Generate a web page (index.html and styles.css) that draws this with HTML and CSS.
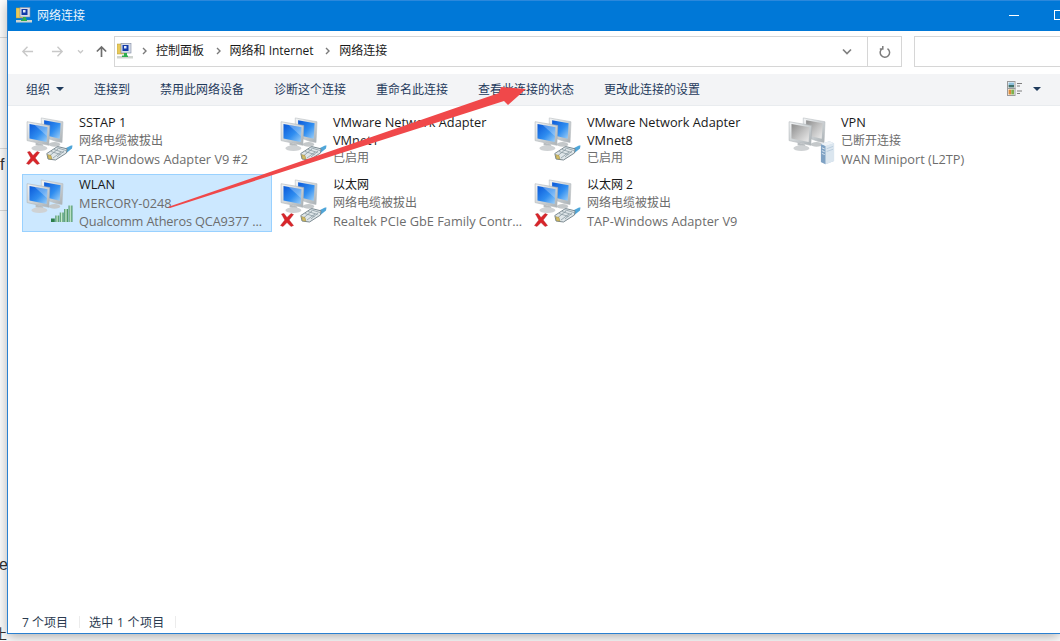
FILE: index.html
```html
<!DOCTYPE html>
<html lang="zh-CN">
<head>
<meta charset="utf-8">
<title>网络连接</title>
<link rel="stylesheet" href="styles.css">
</head>
<body>
<svg class="defs" width="0" height="0" aria-hidden="true">
  <defs>
    <linearGradient id="scr" x1="0" y1="0" x2="1" y2="1"><stop offset="0" stop-color="#0a58d8"/><stop offset=".55" stop-color="#2f8df0"/><stop offset="1" stop-color="#9fd0f7"/></linearGradient>
    <linearGradient id="scrg" x1="0" y1="0" x2="1" y2="1"><stop offset="0" stop-color="#8c8c8c"/><stop offset=".55" stop-color="#c4c4c4"/><stop offset="1" stop-color="#ececec"/></linearGradient>
    <linearGradient id="bez" x1="0" y1="0" x2="1" y2="1"><stop offset="0" stop-color="#f4f6f7"/><stop offset="1" stop-color="#a9b0b4"/></linearGradient>
    <linearGradient id="bar" x1="0" y1="0" x2="1" y2="0"><stop offset="0" stop-color="#2c7f4b"/><stop offset=".45" stop-color="#c8ead0"/><stop offset="1" stop-color="#2c7f4b"/></linearGradient>
    <symbol id="pcs" viewBox="0 0 44 36">
      <path d="M17 1 40 5 39 27 33 26 17 20Z" fill="url(#bez)" stroke="#b4babd" stroke-width=".6"/>
      <path d="M20 3.500 37.500 6.500 36.500 23 20 19Z" fill="url(#scr)"/>
      <ellipse cx="31" cy="29" rx="6" ry="2.500" fill="#c4c8ca"/>
      <path d="M2 5 26 9 25 30 2 25Z" fill="url(#bez)" stroke="#aab0b3" stroke-width=".6"/>
      <path d="M4.500 7.500 23.500 10.800 22.700 26.500 4.500 22.800Z" fill="url(#scr)"/>
      <path d="M10 8.500 23.500 10.800 22.900 20Z" fill="#fff" opacity=".28"/>
      <path d="M11 27 19 29 19 32 11 30Z" fill="#b7bcbf"/>
      <ellipse cx="15" cy="33" rx="8.500" ry="3" fill="#cfd2d4"/>
    </symbol>
    <symbol id="pcs-off" viewBox="0 0 44 36">
      <path d="M17 1 40 5 39 27 33 26 17 20Z" fill="url(#bez)" stroke="#b4babd" stroke-width=".6"/>
      <path d="M20 3.500 37.500 6.500 36.500 23 20 19Z" fill="url(#scrg)"/>
      <ellipse cx="31" cy="29" rx="6" ry="2.500" fill="#c4c8ca"/>
      <path d="M2 5 26 9 25 30 2 25Z" fill="url(#bez)" stroke="#aab0b3" stroke-width=".6"/>
      <path d="M4.500 7.500 23.500 10.800 22.700 26.500 4.500 22.800Z" fill="url(#scrg)"/>
      <path d="M11 27 19 29 19 32 11 30Z" fill="#b7bcbf"/>
      <ellipse cx="15" cy="33" rx="8.500" ry="3" fill="#cfd2d4"/>
    </symbol>
    <symbol id="plug" viewBox="0 0 27 16">
      <path d="M18 4 25 .5 26.500 .5 26 3.500 21 7.500Z" fill="#4fa6d9"/>
      <path d="M.8 8.500 11.500 1.500 21 3.800 20.500 8 9.500 15 2 14Z" fill="#dfe6e9" stroke="#6f7f87" stroke-width=".9"/>
      <path d="M5 6.500 14.500 9.500M8 4.500 17.500 7.500M11 2.800 20 5.500M7 13 15 7M11 12 18 6M4 10.500 12 4" stroke="#7f9099" stroke-width=".7" fill="none"/>
      <path d="M1.500 9.500 2.500 13.800 6 14.300 5 10.500Z" fill="#d2bb62" stroke="#8a7c3c" stroke-width=".4"/>
    </symbol>
    <symbol id="cross" viewBox="0 0 14 14">
      <path d="M1.500 1 4 .5 7 4.500 11 .5 13.500 1.500 9.200 7 13.500 12.500 11 13.500 7 9.500 3 13.500 .5 12.500 4.800 7Z" fill="#d9252a" stroke="#b31c20" stroke-width=".4"/>
    </symbol>
    <symbol id="signal" viewBox="0 0 22 17">
      <path d="M0 13.500h3.800v3.500H0Z" fill="#2c7f4b"/>
      <path d="M4.400 10.500h3.800v6.500H4.400Z" fill="url(#bar)"/>
      <path d="M8.800 7.500h3.800v9.500H8.800Z" fill="url(#bar)"/>
      <path d="M13.200 4h3.800v13h-3.800Z" fill="url(#bar)"/>
      <path d="M17.600 .5h3.800V17h-3.800Z" fill="url(#bar)"/>
    </symbol>
    <symbol id="server" viewBox="0 0 16 26">
      <path d="M1 4 10 1 15 3 15 22 6 25.500 1 23Z" fill="#b9cde0"/>
      <path d="M1 4 6 6 6 25.500 1 23Z" fill="#7fa2c4"/>
      <path d="M6 6 15 3 15 22 6 25.500Z" fill="#dbe6ef"/>
      <path d="M1 4 10 1 15 3 6 6Z" fill="#eef3f7"/>
      <path d="M2 8 5 9.200M2 11 5 12.200M2 14 5 15.200" stroke="#e8f0f6" stroke-width=".9"/>
      <path d="M7 9 14 6.500M7 12 14 9.500" stroke="#a9c0d6" stroke-width=".7"/>
    </symbol>
    <symbol id="netfolder" viewBox="0 0 16 16">
      <path d="M0 1h7l1 1v9H0Z" fill="#e8c95a" stroke="#b39a3c" stroke-width=".5"/>
      <rect x="4" y=".5" width="10" height="9.500" fill="#d7dde8" stroke="#7f8aa0" stroke-width=".6"/>
      <rect x="5.500" y="2" width="6" height="6" fill="#123aa8"/>
      <rect x="7" y="3" width="2.500" height="2.500" fill="#dfe9fb"/>
      <rect x="7" y="10" width="3" height="3" fill="#2fae4e"/>
      <rect x="0" y="13" width="16" height="2.500" fill="#cfd4cf"/>
      <rect x="5" y="12.500" width="6" height="1.500" fill="#2fae4e"/>
    </symbol>
  </defs>
</svg>

<span class="bg-line bg-line-a"></span>
<span class="bg-line bg-line-b"></span>
<span class="bg-line bg-line-c"></span>
<span class="behind behind-f">f</span>
<span class="behind behind-e">e</span>
<span class="behind behind-z">止</span>

<main class="window">
  <header class="titlebar">
    <svg class="title-icon"><use href="#netfolder"/></svg>
    <span class="title-text">网络连接</span>
    <span class="title-spacer"></span>
    <span class="win-min"></span>
    <span class="win-max"></span>
  </header>

  <nav class="addressbar">
    <div class="nav-buttons">
      <svg class="nav-ic" viewBox="0 0 14 14"><path d="M13 7H2M7 2 2 7l5 5" class="stroke-faint"/></svg>
      <svg class="nav-ic nav-fwd" viewBox="0 0 14 14"><path d="M1 7h11M7 2l5 5-5 5" class="stroke-faint"/></svg>
      <svg class="nav-down" viewBox="0 0 8 6"><path d="M1 1.500 4 4.500 7 1.500" class="stroke-faint"/></svg>
      <svg class="nav-ic nav-up" viewBox="0 0 14 14"><path d="M7 13V2M2 7l5-5 5 5" class="stroke-up"/></svg>
    </div>
    <div class="address">
      <svg class="addr-icon"><use href="#netfolder"/></svg>
      <svg class="crumb-sep" viewBox="0 0 5 8"><path d="M1 1 4 4 1 7" class="stroke-sep"/></svg><span class="crumb">控制面板</span>
      <svg class="crumb-sep" viewBox="0 0 5 8"><path d="M1 1 4 4 1 7" class="stroke-sep"/></svg><span class="crumb">网络和 Internet</span>
      <svg class="crumb-sep" viewBox="0 0 5 8"><path d="M1 1 4 4 1 7" class="stroke-sep"/></svg><span class="crumb">网络连接</span>
      <span class="addr-spacer"></span>
      <svg class="addr-drop" viewBox="0 0 10 7"><path d="M1 1.500 5 5.500 9 1.500" class="stroke-mid"/></svg>
      <span class="addr-refresh">
        <svg viewBox="0 0 12 12" width="12" height="12"><path d="M3.800 2.300A4.700 4.700 0 1 0 8.500 2.600M3.800 0V3H.8" class="stroke-mid2"/></svg>
      </span>
    </div>
    <div class="search"></div>
  </nav>

  <div class="toolbar">
    <span class="tool tool-org">组织<i class="caret"></i></span>
    <span class="tool">连接到</span>
    <span class="tool">禁用此网络设备</span>
    <span class="tool">诊断这个连接</span>
    <span class="tool">重命名此连接</span>
    <span class="tool">查看此连接的状态</span>
    <span class="tool">更改此连接的设置</span>
    <span class="tool-spacer"></span>
    <svg class="view-ic" viewBox="0 0 15 15">
      <rect x=".5" y=".5" width="7.500" height="7" fill="#fff" stroke="#9a9a9a"/>
      <rect x="1.500" y="1.500" width="5.500" height="2.500" fill="#8fc0dc"/>
      <rect x="1.500" y="4" width="5.500" height="2.500" fill="#3f6f6a"/>
      <rect x=".5" y="7.500" width="7.500" height="7" fill="#fff" stroke="#9a9a9a"/>
      <rect x="1.500" y="8.500" width="2.800" height="5" fill="#d98a3c"/>
      <rect x="4.300" y="8.500" width="2.700" height="5" fill="#7fb04c"/>
      <path d="M10 2.500h5M10 5h3M10 10h5M10 12.500h3" stroke="#7f7f7f"/>
    </svg>
    <i class="caret caret-view"></i>
  </div>

  <section class="content">
    <div class="grid">
      <article class="item">
        <div class="icon"><svg class="pcs"><use href="#pcs"/></svg><svg class="plug"><use href="#plug"/></svg><svg class="cross"><use href="#cross"/></svg></div>
        <div class="text"><div class="name latin first">SSTAP 1</div><div class="sub">网络电缆被拔出</div><div class="sub latin">TAP-Windows Adapter V9 #2</div></div>
      </article>
      <article class="item">
        <div class="icon"><svg class="pcs"><use href="#pcs"/></svg><svg class="plug"><use href="#plug"/></svg></div>
        <div class="text tight"><div class="name latin first">VMware Network Adapter</div><div class="name latin">VMnet1</div><div class="sub">已启用</div></div>
      </article>
      <article class="item">
        <div class="icon"><svg class="pcs"><use href="#pcs"/></svg><svg class="plug"><use href="#plug"/></svg></div>
        <div class="text tight"><div class="name latin first">VMware Network Adapter</div><div class="name latin">VMnet8</div><div class="sub">已启用</div></div>
      </article>
      <article class="item">
        <div class="icon"><svg class="pcs"><use href="#pcs-off"/></svg><svg class="server"><use href="#server"/></svg></div>
        <div class="text"><div class="name latin first">VPN</div><div class="sub">已断开连接</div><div class="sub latin">WAN Miniport (L2TP)</div></div>
      </article>
      <article class="item selected">
        <div class="icon"><svg class="pcs"><use href="#pcs"/></svg><svg class="signal"><use href="#signal"/></svg></div>
        <div class="text"><div class="name latin first">WLAN</div><div class="sub latin">MERCORY-0248</div><div class="sub latin squeeze">Qualcomm Atheros QCA9377 ...</div></div>
      </article>
      <article class="item">
        <div class="icon"><svg class="pcs"><use href="#pcs"/></svg><svg class="plug"><use href="#plug"/></svg><svg class="cross"><use href="#cross"/></svg></div>
        <div class="text"><div class="name">以太网</div><div class="sub">网络电缆被拔出</div><div class="sub latin">Realtek PCIe GbE Family Contr...</div></div>
      </article>
      <article class="item">
        <div class="icon"><svg class="pcs"><use href="#pcs"/></svg><svg class="plug"><use href="#plug"/></svg><svg class="cross"><use href="#cross"/></svg></div>
        <div class="text"><div class="name">以太网 2</div><div class="sub">网络电缆被拔出</div><div class="sub latin">TAP-Windows Adapter V9</div></div>
      </article>
    </div>
  </section>

  <footer class="statusbar">
    <span class="status">7 个项目</span>
    <span class="status status-wide">选中 1 个项目</span>
  </footer>
</main>

<svg class="arrow" viewBox="0 0 1060 641" aria-hidden="true">
  <path d="M168 207 499 93 501 87 526 89 508 105 504 101 170 208Z" fill="#f0484a"/>
</svg>
</body>
</html>
```

FILE: styles.css
```css
* { box-sizing: border-box; }
html, body { margin: 0; padding: 0; height: 100%; }
body {
  width: 1060px;
  height: 641px;
  overflow: hidden;
  position: relative;
  background: #fff;
  font-family: "Open Sans", "Noto Sans CJK SC", sans-serif;
  font-size: 12px;
}
.defs { position: absolute; }
.bg-line { position: absolute; left: 0; width: 7px; height: 1px; background: #dcdcdc; }
.bg-line-a { top: 37px; }
.bg-line-b { top: 148px; }
.bg-line-c { top: 210px; }
.behind { position: absolute; font-size: 16px; line-height: 18px; color: #333; font-family: "Liberation Sans", "Noto Sans CJK SC", sans-serif; }
.behind-f { top: 156px; left: 0; }
.behind-e { top: 556px; left: -1px; }
.behind-z { top: 625px; left: -7px; font-size: 14px; }

.window {
  position: absolute;
  left: 7px;
  top: 0;
  width: 1053px;
  height: 634px;
  background: #fff;
  border-left: 1px solid #2a80d0;
  border-bottom: 1px solid #2a80d0;
  box-shadow: 0 3px 12px rgba(0, 0, 0, .32);
  display: flex;
  flex-direction: column;
}

.titlebar {
  height: 31px;
  flex: none;
  background: #0078d7;
  display: flex;
  align-items: center;
  color: #fff;
  padding: 0 0 2px 8px;
  border-top: 1px solid #2b88dc;
}
.title-icon { width: 16px; height: 16px; margin-right: 5px; }
.title-text { color: #eaf4fc; }
.title-spacer { flex: 1; }
.win-min { width: 10px; height: 1px; background: #fff; margin-right: 35px; }
.win-max { width: 6px; height: 10px; border: 1px solid #fff; border-right-width: 0; }

.addressbar {
  height: 43px;
  flex: none;
  display: flex;
  align-items: flex-start;
  padding-top: 5px;
}
.nav-buttons { width: 106px; height: 30px; display: flex; align-items: center; padding-left: 13px; }
.nav-ic { width: 13px; height: 13px; }
.nav-fwd { margin-left: 17px; }
.nav-down { width: 7px; height: 5px; margin-left: 13px; }
.nav-up { margin-left: 11px; }
.stroke-faint { fill: none; stroke: #c8c8c8; stroke-width: 1.5; }
.stroke-up { fill: none; stroke: #6e6e6e; stroke-width: 1.8; }
.stroke-mid { fill: none; stroke: #808080; stroke-width: 1.7; }
.stroke-mid2 { fill: none; stroke: #7c7c7c; stroke-width: 1.5; }
.stroke-sep { fill: none; stroke: #7a7a7a; stroke-width: 1.4; }

.address {
  width: 788px;
  height: 31px;
  border: 1px solid #d6d6d6;
  display: flex;
  align-items: center;
  padding-left: 2px;
  color: #1a1a1a;
}
.addr-icon { width: 16px; height: 16px; margin-right: 9px; margin-top: -2px; }
.crumb-sep { width: 5px; height: 8px; margin-right: 9px; margin-top: -2px; flex: none; }
.crumb { margin-right: 11.5px; margin-top: -3px; }
.addr-spacer { flex: 1; }
.addr-drop { width: 10px; height: 7px; margin-right: 15px; margin-top: -1px; }
.addr-refresh { width: 34px; height: 29px; border-left: 1px solid #d6d6d6; display: flex; align-items: center; justify-content: center; }
.search { margin-left: 12px; width: 146px; height: 31px; border: 1px solid #d6d6d6; border-right: 0; }

.toolbar {
  height: 32px;
  flex: none;
  background: #f3f4f6;
  border-bottom: 1px solid #e9ecef;
  display: flex;
  align-items: center;
  padding: 0 0 2px 18px;
  color: #1f3a5c;
  gap: 30px;
}
.tool { white-space: nowrap; }
.tool-org { display: flex; align-items: center; }
.caret { display: inline-block; width: 0; height: 0; border: 4px solid transparent; border-top-color: #1f3a5c; border-bottom: 0; margin-left: 6px; }
.tool-spacer { flex: 1; }
.view-ic { width: 15px; height: 15px; }
.caret-view { margin-left: -19px; margin-right: 19px; border-width: 4px 4.5px 0; }

.content { flex: 1; padding: 6px 0 0 14px; min-height: 0; }
.grid { display: grid; grid-template-columns: repeat(4, 250px); column-gap: 4px; grid-auto-rows: 58px; row-gap: 4px; }
.item { display: flex; height: 58px; padding-left: 2px; border: 1px solid transparent; }
.item.selected { background: #cce8ff; border-color: #99d1ff; }
.icon { width: 54px; position: relative; flex: none; }
.pcs { position: absolute; left: 0; top: 4px; width: 42px; height: 34px; }
.plug { position: absolute; left: 21px; top: 32px; width: 27px; height: 16px; }
.cross { position: absolute; left: 1px; top: 38px; width: 14px; height: 14px; }
.signal { position: absolute; left: 26px; top: 30px; width: 22px; height: 17px; }
.server { position: absolute; left: 33px; top: 27px; width: 15px; height: 25px; }
.text { line-height: 18px; padding-top: 1px; min-width: 0; white-space: nowrap; }
.text.tight { line-height: 17px; padding-top: 2px; }
.latin { font-size: 12.75px; }
.first { margin-top: -1px; margin-bottom: 1px; }
.squeeze { letter-spacing: -.15px; }
.name { color: #1a1a1a; }
.sub { color: #6d6d6d; }

.statusbar {
  height: 20px;
  flex: none;
  display: flex;
  align-items: center;
  margin-bottom: 1px;
  padding-left: 14px;
  color: #2a3a4f;
  gap: 21px;
}
.status { position: relative; }
.status-wide { letter-spacing: .3px; }
.status::after { content: ""; position: absolute; right: -12px; top: 3px; height: 12px; width: 1px; background: #ececec; }

.arrow { position: absolute; left: 0; top: 0; width: 1060px; height: 641px; pointer-events: none; }
```
